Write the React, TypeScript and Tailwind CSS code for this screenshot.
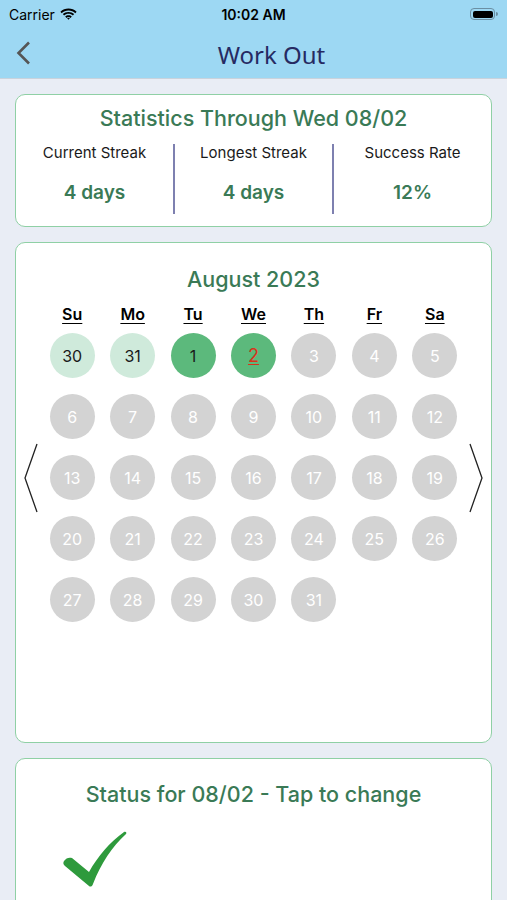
const weekdays = ['Su', 'Mo', 'Tu', 'We', 'Th', 'Fr', 'Sa'];

type Day = { n: number; kind: 'prev' | 'done' | 'today' | 'future' };

const days: Day[] = [
  { n: 30, kind: 'prev' },
  { n: 31, kind: 'prev' },
  { n: 1, kind: 'done' },
  { n: 2, kind: 'today' },
  ...Array.from({ length: 29 }, (_, i) => ({ n: i + 3, kind: 'future' as const })),
];

function StatusBar() {
  return (
    <div className="h-[28px] flex items-center justify-between px-[9px] text-[14px] text-black">
      <div className="flex items-center gap-[5px] w-[100px]">
        <span>Carrier</span>
        <svg width="17" height="12" viewBox="0 0 17 12">
          <path d="M8.5 2.5c2.6 0 5 1 6.8 2.7l1.3-1.4C14.4 1.8 11.6.6 8.5.6S2.6 1.8.4 3.8l1.3 1.4C3.5 3.5 5.9 2.5 8.5 2.5z" fill="#000" />
          <path d="M8.5 5.8c1.7 0 3.2.6 4.4 1.7l1.3-1.4C12.7 4.7 10.7 3.9 8.5 3.9S4.3 4.7 2.8 6.1l1.3 1.4C5.3 6.4 6.8 5.8 8.5 5.8z" fill="#000" />
          <path d="M8.5 9.1c.8 0 1.5.3 2 .8l1.3-1.4C11 7.7 9.8 7.2 8.5 7.2S6 7.7 5.2 8.5l1.3 1.4c.5-.5 1.2-.8 2-.8z" fill="#000" />
          <path d="M8.5 11.8l1.4-1.5c-.4-.4-.9-.6-1.4-.6s-1 .2-1.4.6z" fill="#000" />
        </svg>
      </div>
      <span className="font-semibold">10:02 AM</span>
      <div className="w-[100px] flex justify-end">
        <div className="flex items-center">
          <div className="w-[25px] h-[12px] rounded-[4px] border border-[#6b8fa3] p-[1.5px]">
            <div className="w-full h-full rounded-[2px] bg-black" />
          </div>
          <div className="w-[1.5px] h-[4px] bg-[#6b8fa3] rounded-r-sm ml-[1px]" />
        </div>
      </div>
    </div>
  );
}

function Chevron({ dir }: { dir: 'left' | 'right' }) {
  return (
    <svg width="14" height="70" viewBox="0 0 14 70">
      <polyline
        points={dir === 'left' ? '13,1 1,35 13,69' : '1,1 13,35 1,69'}
        fill="none"
        stroke="#222"
        strokeWidth="1.3"
      />
    </svg>
  );
}

function DayCircle({ day }: { day: Day }) {
  const base = 'w-[45px] h-[45px] rounded-full flex items-center justify-center text-[16px]';
  if (day.kind === 'prev') return <div className={`${base} bg-[#cfeadb] text-[#1a1a1a]`}>{day.n}</div>;
  if (day.kind === 'done') return <div className={`${base} bg-[#5cb97c] text-[#1a1a1a]`}>{day.n}</div>;
  if (day.kind === 'today')
    return (
      <div className={`${base} bg-[#5cb97c] text-[#d8341c] underline underline-offset-2 text-[18px]`}>{day.n}</div>
    );
  return <div className={`${base} bg-[#d3d3d3] text-white`}>{day.n}</div>;
}

export default function App() {
  return (
    <div className="w-[507px] h-[900px] overflow-hidden bg-[#e9edf5] font-['Inter',sans-serif]">
      <div className="bg-[#9dd8f3] h-[79px] border-b border-[#c9d3dd]">
        <StatusBar />
        <div className="relative h-[51px] flex items-center justify-center">
          <svg className="absolute left-[16px] top-[13px]" width="15" height="24" viewBox="0 0 15 24">
            <polyline points="13,1.5 2.5,12 13,22.5" fill="none" stroke="#555" strokeWidth="2.6" />
          </svg>
          <span className="text-[24px] text-[#262a62] font-['Noto_Sans',sans-serif] pl-[36px] mt-[2px]">
            Work Out
          </span>
        </div>
      </div>

      <div className="px-[15px] pt-[15px] flex flex-col gap-[15px]">
        <div className="bg-white border border-[#8fd0a5] rounded-[10px] h-[133px] pt-[9px]">
          <div className="text-center text-[21.5px] leading-[28px] font-medium text-[#3a7a56]">
            Statistics Through Wed 08/02
          </div>
          <div className="flex mt-[12px] h-[70px]">
            {[
              ['Current Streak', '4 days'],
              ['Longest Streak', '4 days'],
              ['Success Rate', '12%'],
            ].map(([label, value], i) => (
              <div
                key={label}
                className={`flex-1 flex flex-col items-center ${i > 0 ? 'border-l-2 border-[#7e80b0]' : ''}`}
              >
                <div className="text-[15px] leading-[18px] text-[#1a1a1a]">{label}</div>
                <div className="mt-[18px] text-[19px] leading-[26px] font-semibold text-[#3a7a56]">{value}</div>
              </div>
            ))}
          </div>
        </div>

        <div className="bg-white border border-[#8fd0a5] rounded-[10px] h-[501px] pt-[22px] px-[8px]">
          <div className="text-center text-[21.5px] leading-[28px] font-medium text-[#3a7a56]">August 2023</div>
          <div className="w-[423px] mx-auto grid grid-cols-7 mt-[9px]">
            {weekdays.map((w) => (
              <div key={w} className="text-center text-[16px] leading-[24px] font-semibold text-black underline underline-offset-[3px]">
                {w}
              </div>
            ))}
          </div>
          <div className="flex items-center justify-between mt-[7px]">
            <Chevron dir="left" />
            <div className="w-[423px] grid grid-cols-7 gap-y-[16px]">
              {days.map((d, i) => (
                <div key={i} className="flex justify-center">
                  <DayCircle day={d} />
                </div>
              ))}
            </div>
            <Chevron dir="right" />
          </div>
        </div>

        <div className="bg-white border border-[#8fd0a5] rounded-[10px] h-[200px] pt-[21px]">
          <div className="text-center text-[21.5px] leading-[28px] font-medium text-[#3a7a56]">
            Status for 08/02 - Tap to change
          </div>
          <div className="pl-[46px] mt-[22px]">
            <svg width="66" height="58" viewBox="0 0 66 58">
              <path
                d="M2 31 C4 28 7 27 10 28 L27 42 C36 26 48 12 62 2 C64 1 65 3 64 4 C50 17 39 33 31 54 C30 57 28 57 27 56 L3 36 C1 34 1 33 2 31 Z"
                fill="#2e9a3c"
              />
            </svg>
          </div>
        </div>
      </div>
    </div>
  );
}
